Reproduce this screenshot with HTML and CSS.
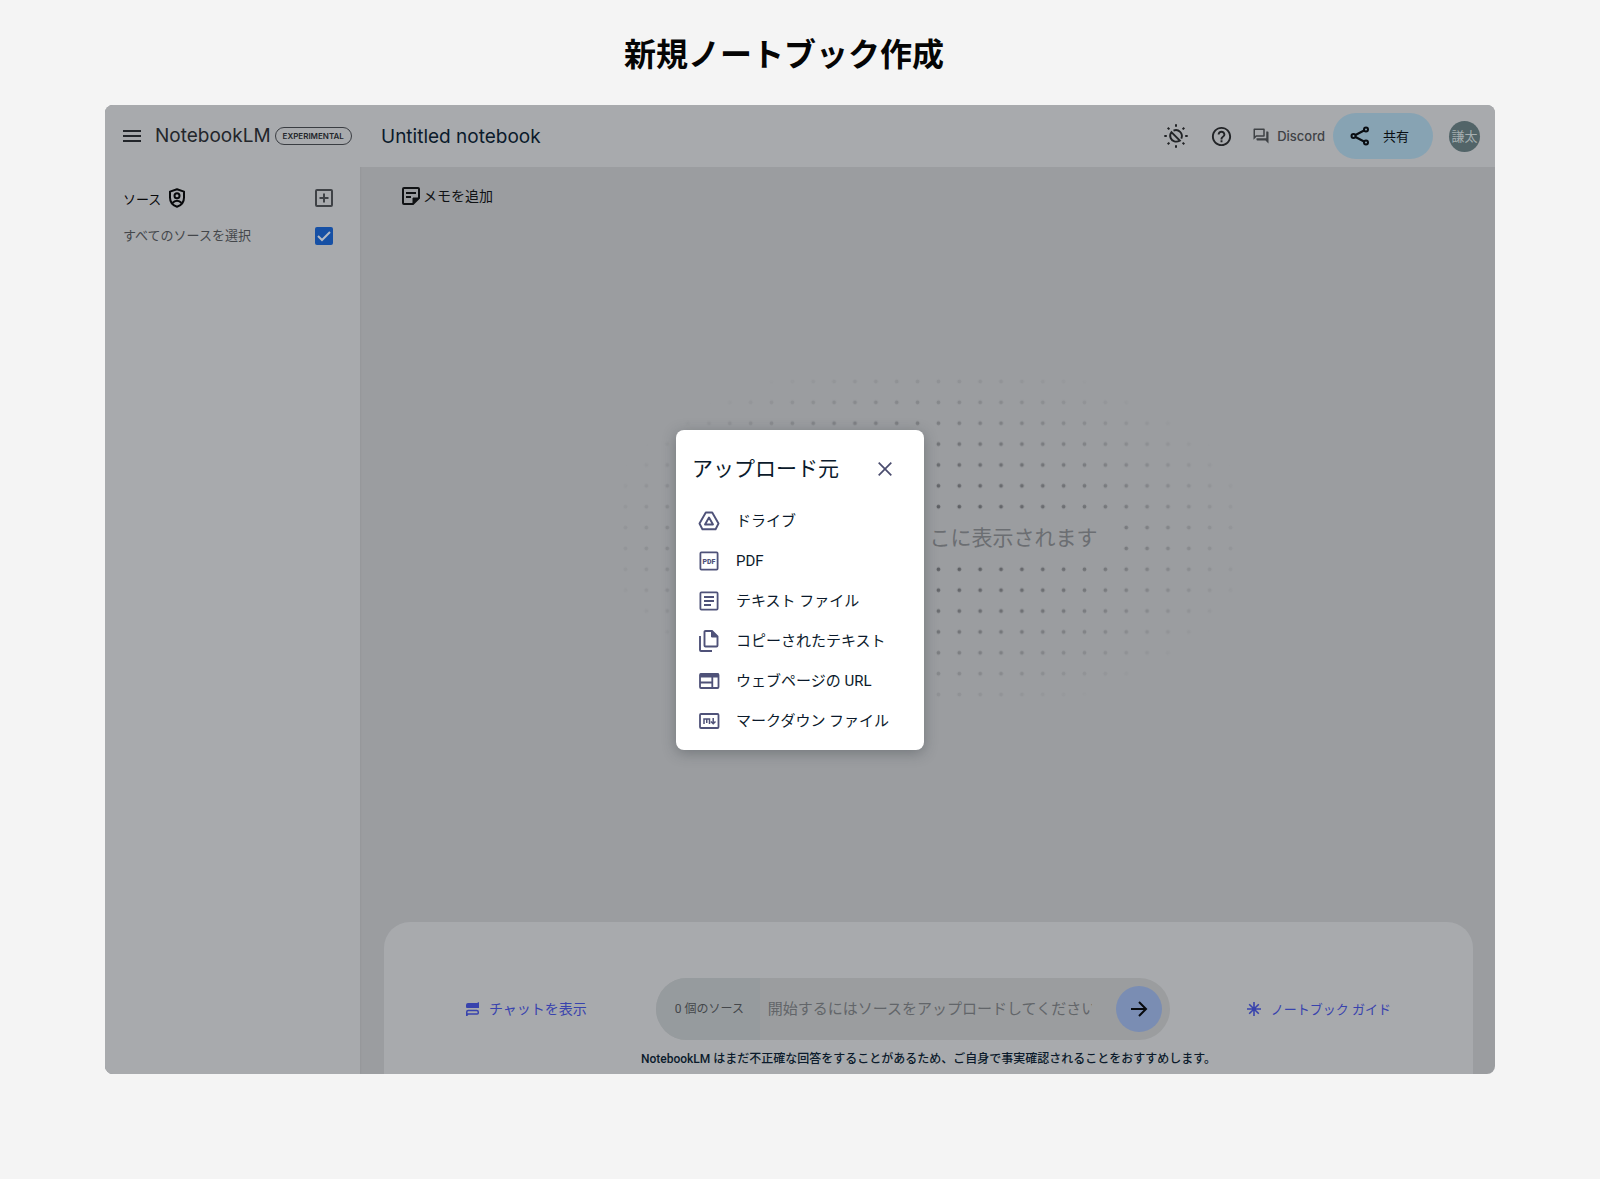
FILE: index.html
```html
<!DOCTYPE html>
<html lang="ja">
<head>
<meta charset="utf-8">
<meta name="viewport" content="width=device-width, initial-scale=1">
<title>新規ノートブック作成</title>
<link rel="stylesheet" href="styles.css">
</head>
<body>
<h1 class="page-title">新規ノートブック作成</h1>
<main class="app">
  <aside class="sidebar">
    <div class="brand">
      <button class="icon-button" type="button" aria-label="メニュー">
        <svg width="18" height="18" viewBox="0 0 18 18" fill="none" stroke="currentColor" stroke-width="2"><path d="M0 4h18M0 9h18M0 14h18"/></svg>
      </button>
      <span class="brand-name">NotebookLM</span>
      <span class="badge">EXPERIMENTAL</span>
    </div>
    <div class="source-list">
      <div class="source-row source-head">
        <h2 class="source-title">ソース
          <svg width="18" height="20" viewBox="0 0 18 20" fill="none" stroke="currentColor" stroke-width="2"><path d="M9 1.2 16 3.6V9.5C16 14 13.2 17.400 9 18.800 4.800 17.400 2 14 2 9.500V3.600Z" stroke-linejoin="round"/><circle cx="9" cy="7.800" r="2.500"/><path d="M4.500 15C6 13.200 7.500 12.800 9 12.800s3 .4 4.500 2.200"/></svg>
        </h2>
        <button class="icon-button add" type="button" aria-label="ソースを追加">
          <svg width="18" height="18" viewBox="0 0 18 18" fill="none" stroke="currentColor" stroke-width="2"><rect x="1" y="1" width="16" height="16" rx="1"/><path d="M9 4.500v9M4.500 9h9"/></svg>
        </button>
      </div>
      <div class="source-row">
        <label class="select-label" for="select-all">すべてのソースを選択</label>
        <span class="check">
          <input id="select-all" class="check-input" type="checkbox" checked>
          <svg class="check-mark" width="18" height="18" viewBox="0 0 18 18" fill="none" stroke="currentColor" stroke-width="2"><path d="m3 9 4 4 8-8"/></svg>
        </span>
      </div>
    </div>
  </aside>
  <section class="workspace">
    <header class="topbar">
      <h2 class="notebook-name">Untitled notebook</h2>
      <div class="actions">
        <button class="icon-button" type="button" aria-label="テーマ">
          <svg width="24" height="24" viewBox="0 0 24 24" fill="none" stroke="currentColor" stroke-width="2"><path d="M12 .3v2.500M12 21.200v2.500M.3 12h2.500M21.200 12h2.500M3.700 3.700l1.700 1.700M18.600 18.600l1.700 1.700M3.700 20.300l1.700-1.700M18.600 5.400l1.700-1.700"/><path d="M9.500 6.600A6 6 0 0 1 17.300 14.600" stroke-width="1.900"/><path d="M7.400 8.200 15.800 16.600C12 18.800 8 17.200 6.600 14 5.800 12 6.200 9.800 7.400 8.200Z" stroke-width="1.900"/></svg>
        </button>
        <button class="icon-button" type="button" aria-label="ヘルプ">
          <svg width="23" height="23" viewBox="0 0 24 24" fill="currentColor"><path d="M11 18h2v-2h-2v2zm1-16C6.480 2 2 6.480 2 12s4.480 10 10 10 10-4.480 10-10S17.520 2 12 2zm0 18c-4.410 0-8-3.590-8-8s3.590-8 8-8 8 3.590 8 8-3.590 8-8 8zm0-14c-2.210 0-4 1.790-4 4h2c0-1.100.9-2 2-2s2 .9 2 2c0 2-3 1.750-3 5h2c0-2.250 3-2.500 3-5 0-2.210-1.790-4-4-4z"/></svg>
        </button>
        <a class="discord" href="#">
          <svg width="18" height="18" viewBox="0 0 24 24" fill="currentColor"><path d="M15 4v7H5.170L4 12.170V4h11m1-2H3c-.55 0-1 .45-1 1v14l4-4h10c.55 0 1-.45 1-1V3c0-.55-.45-1-1-1zm5 4h-2v9H6v2c0 .55.45 1 1 1h11l4 4V7c0-.55-.45-1-1-1z"/></svg>
          Discord
        </a>
        <button class="share" type="button">
          <svg width="20" height="20" viewBox="0 0 20 20" fill="none" stroke="currentColor" stroke-width="2"><circle cx="16" cy="3.500" r="2"/><circle cx="3.500" cy="10" r="2"/><circle cx="16" cy="16.500" r="2"/><path d="m5.500 9 8.500-4.500M5.500 11l8.500 4.500"/></svg>
          <span class="raised">共有</span>
        </button>
        <button class="avatar" type="button"><span class="raised">謙太</span></button>
      </div>
    </header>
    <div class="canvas">
      <button class="add-note" type="button">
        <svg width="18" height="18" viewBox="0 0 18 18" fill="none" stroke="currentColor" stroke-width="2"><path d="M2 1H16Q17 1 17 2V11L11 17H2Q1 17 1 16V2Q1 1 2 1Z"/><path d="M4 6h10M4 10h5"/><path d="M11 17v-6h6z" fill="currentColor" stroke-width="1"/></svg>
        メモを追加
      </button>
      <div class="empty">
        <svg class="dots" width="626" height="334" viewBox="0 0 626 334" aria-hidden="true">
          <defs>
            <pattern id="dot" width="20.867" height="20.875" patternUnits="userSpaceOnUse"><circle cx="10.430" cy="10.430" r="1.900" fill="#54565a"/></pattern>
            <radialGradient id="fade"><stop offset="0" stop-color="#fff"/><stop offset=".5" stop-color="#999"/><stop offset="1" stop-color="#000"/></radialGradient>
            <mask id="oval"><ellipse cx="313" cy="167" rx="330" ry="180" fill="url(#fade)"/></mask>
          </defs>
          <rect width="626" height="334" fill="url(#dot)" mask="url(#oval)"/>
        </svg>
        <p class="empty-text">こに表示されます</p>
      </div>
    </div>
    <footer class="chat-panel">
      <div class="chat-row">
        <button class="text-button" type="button">
          <svg width="13" height="14" viewBox="0 0 13 14"><path d="M2 1H11L13 0V6H1Q0 6 0 5V3Q0 1 2 1Z" fill="currentColor"/><path d="M.75 13.500V10Q.75 8.500 2.200 8.500H10.800Q12.250 8.500 12.250 10V11Q12.250 12 11.200 12H2Z" fill="none" stroke="currentColor" stroke-width="1.500"/></svg>
          <span class="raised">チャットを表示</span>
        </button>
        <form class="prompt">
          <label class="prompt-count" for="prompt">0 個のソース</label>
          <input id="prompt" class="prompt-input" type="text" placeholder="開始するにはソースをアップロードしてください">
          <button class="send" type="button" aria-label="送信">
            <svg width="18" height="18" viewBox="0 0 18 18" fill="none" stroke="currentColor" stroke-width="2"><path d="M1 9h15M9 2l7 7-7 7"/></svg>
          </button>
        </form>
        <button class="text-button guide" type="button">
          <svg width="14" height="14" viewBox="0 0 14 14" fill="none" stroke="currentColor" stroke-width="1.600"><path d="M7 0v14M0 7h14M2.200 2.200l9.600 9.600M11.800 2.200l-9.600 9.600"/></svg>
          <span class="raised">ノートブック ガイド</span>
        </button>
      </div>
      <p class="disclaimer">NotebookLM はまだ不正確な回答をすることがあるため、ご自身で事実確認されることをおすすめします。</p>
    </footer>
  </section>
  <div class="modal-layer">
    <section class="dialog" role="dialog" aria-labelledby="dialog-title">
      <div class="dialog-head">
        <h2 id="dialog-title" class="dialog-title">アップロード元</h2>
        <button class="icon-button close" type="button" aria-label="閉じる">
          <svg width="14" height="14" viewBox="0 0 14 14" fill="none" stroke="currentColor" stroke-width="1.700"><path d="m.7.7 12.600 12.600M13.300.7.7 13.300"/></svg>
        </button>
      </div>
      <button class="upload" type="button">
        <svg width="22" height="22" viewBox="0 0 22 22" fill="none" stroke="currentColor" stroke-width="1.900" stroke-linejoin="round"><path d="M7.800 2.500h6.400L20.500 13.500 17.600 19.200H4.400L1.500 13.500Z"/><path d="M11 7.500 15 14.500H7Z"/></svg>
        ドライブ
      </button>
      <button class="upload" type="button">
        <svg width="22" height="22" viewBox="0 0 22 22" fill="none" stroke="currentColor" stroke-width="1.800"><rect x="2.400" y="2.400" width="17.200" height="17.200" rx="1"/><text class="glyph" x="11" y="13.700" text-anchor="middle">PDF</text></svg>
        PDF
      </button>
      <button class="upload" type="button">
        <svg width="22" height="22" viewBox="0 0 22 22" fill="none" stroke="currentColor" stroke-width="1.800"><rect x="2.400" y="2.400" width="17.200" height="17.200" rx="1"/><path d="M6 7h10M6 11h10M6 15h7"/></svg>
        テキスト ファイル
      </button>
      <button class="upload" type="button">
        <svg width="22" height="22" viewBox="0 0 22 22" fill="none" stroke="currentColor" stroke-width="1.900"><path d="M7.500 1H14L19.500 6.500V15.500Q19.500 16.500 18.500 16.500H7.500Q6.500 16.500 6.500 15.500V2Q6.500 1 7.500 1Z"/><path d="M13.500 1v6h6z" fill="currentColor" stroke-width="1"/><path d="M2 6V20Q2 21 3 21H14"/></svg>
        コピーされたテキスト
      </button>
      <button class="upload" type="button">
        <svg width="22" height="22" viewBox="0 0 22 22" fill="none" stroke="currentColor" stroke-width="1.800"><rect x="2" y="4" width="18.500" height="14" rx="1"/><path d="M2 5.500h18.500" stroke-width="4"/><path d="M2 12.500h12M14.300 7v11"/></svg>
        ウェブページの URL
      </button>
      <button class="upload" type="button">
        <svg width="22" height="22" viewBox="0 0 22 22" fill="none" stroke="currentColor" stroke-width="1.800"><rect x="2" y="4" width="18.500" height="14" rx="1"/><path d="M6 14V9h5.500v5M8.750 9v4M15.200 8v5.500M12.900 11.500l2.300 2.300 2.300-2.300" stroke-width="1.500"/></svg>
        マークダウン ファイル
      </button>
    </section>
  </div>
</main>
</body>
</html>
```
FILE: styles.css
```css
* {
  box-sizing: border-box;
}

body {
  margin: 0;
  background: #f4f4f4;
  color: #0b1a2b;
  font-family: Roboto, "Noto Sans CJK JP", sans-serif;
  font-size: 13px;
}

h1, h2, p {
  margin: 0;
  font-weight: 400;
}

button {
  display: flex;
  align-items: center;
  padding: 0;
  border: 0;
  background: none;
  color: inherit;
  font: inherit;
  cursor: pointer;
}

svg {
  display: block;
  flex: none;
}

/* Japanese glyphs sit low in their line box; this centres them on icons */
.raised {
  padding-bottom: 2px;
}

.page-title {
  padding: 28px 32px 29px 0;
  color: #050505;
  font-family: "Noto Sans CJK JP", sans-serif;
  font-size: 32px;
  font-weight: 700;
  line-height: 48px;
  text-align: center;
}

.app {
  position: relative;
  display: flex;
  min-height: calc(100vh - 210px);
  margin: 0 105px 105px;
  overflow: hidden;
  border-radius: 8px;
  background: #9b9da0;
}

/* Sidebar */

.sidebar {
  flex: 0 0 255px;
  background: #a8aaad;
  box-shadow: 0 0 2px #8d9093;
}

.brand {
  display: flex;
  align-items: center;
  height: 62px;
  padding-left: 18px;
  color: #23262b;
}

.brand-name {
  margin-left: 14px;
  font-family: Inter, sans-serif;
  font-size: 19px;
  line-height: 24px;
}

.badge {
  margin-left: 4px;
  padding: 0 7px;
  border: 1px solid #3a3d42;
  border-radius: 9px;
  font-family: Inter, sans-serif;
  font-size: 8px;
  font-weight: 600;
  line-height: 16px;
}

.source-list {
  padding: 12px 27px 0 18px;
}

.source-row {
  display: flex;
  align-items: center;
  justify-content: space-between;
  height: 38px;
}

.source-title {
  display: flex;
  align-items: center;
  gap: 7px;
  color: #08090b;
  font-size: 13px;
}

.add {
  color: #3f4246;
}

.select-label {
  padding-bottom: 3px;
  color: #44474b;
}

.check {
  position: relative;
  width: 18px;
  height: 18px;
}

.check-input {
  width: 18px;
  height: 18px;
  margin: 0;
  border-radius: 2px;
  appearance: none;
}

.check-input:checked {
  background: #1650a5;
}

.check-mark {
  position: absolute;
  inset: 0;
  color: #b4bac4;
  pointer-events: none;
}

/* Workspace */

.workspace {
  display: flex;
  flex: 1;
  flex-direction: column;
  min-width: 0;
}

.topbar {
  display: flex;
  align-items: center;
  justify-content: space-between;
  height: 62px;
  padding: 0 15px 0 21px;
  background: #a8aaad;
}

.notebook-name {
  padding-top: 2px;
  font-family: Inter, sans-serif;
  font-size: 19px;
  line-height: 24px;
}

.actions {
  display: flex;
  align-items: center;
  gap: 22px;
  color: #222427;
}

.discord {
  display: flex;
  align-items: center;
  gap: 7px;
  margin-right: -14px;
  margin-left: -3px;
  color: #3f4246;
  font-family: Inter, sans-serif;
  font-size: 13px;
  font-weight: 500;
  text-decoration: none;
}

.share {
  gap: 13px;
  height: 46px;
  margin-right: -6px;
  padding: 0 24px 0 17px;
  border-radius: 23px;
  background: #87a3b3;
  color: #090d12;
}

.avatar {
  justify-content: center;
  width: 31px;
  height: 31px;
  border-radius: 50%;
  background: #526468;
  color: #a6afb1;
  white-space: nowrap;
}

.canvas {
  display: flex;
  flex: 1;
  flex-direction: column;
}

.add-note {
  align-self: flex-start;
  gap: 3px;
  margin: 19px 0 0 42px;
  color: #101214;
  font-size: 14px;
  line-height: 20px;
}

.empty {
  display: grid;
  flex: 1;
  place-items: center;
  padding-bottom: 52px;
}

.dots,
.empty-text {
  grid-area: 1 / 1;
}

.empty-text {
  padding: 0 22px 0 194px;
  background: #9b9da0;
  color: #6b6e72;
  font-size: 21px;
  line-height: 40px;
}

/* Chat panel */

.chat-panel {
  margin: 0 22px 0 24px;
  padding: 56px 0 6px;
  border-radius: 26px 26px 0 0;
  background: #a8aaad;
}

.chat-row {
  display: flex;
  align-items: center;
  justify-content: space-between;
  padding: 0 82px;
}

.text-button {
  gap: 10px;
  color: #3843ad;
  font-size: 14px;
}

.guide {
  font-size: 13px;
}

.prompt {
  display: flex;
  flex: 0 1 514px;
  align-items: center;
  height: 62px;
  margin-right: 8px;
  padding-right: 8px;
  overflow: hidden;
  border-radius: 31px;
  background: #9b9d9f;
}

.prompt-count {
  flex: 0 0 104px;
  padding-left: 19px;
  background: #969b9e;
  color: #44474b;
  font-size: 12px;
  line-height: 62px;
}

.prompt-input {
  flex: 1;
  min-width: 0;
  margin-right: 24px;
  padding: 0 0 0 8px;
  border: 0;
  background: none;
  font: inherit;
  font-size: 15px;
  line-height: 24px;
}

.prompt-input::placeholder {
  color: #626569;
}

.send {
  flex: none;
  justify-content: center;
  width: 46px;
  height: 46px;
  border-radius: 50%;
  background: #7a8db3;
  color: #080a0e;
}

.disclaimer {
  margin-top: 10px;
  font-size: 12px;
  font-weight: 500;
  line-height: 18px;
  text-align: center;
}

/* Upload dialog */

.modal-layer {
  position: absolute;
  inset: 0;
  display: grid;
  place-items: center;
}

.dialog {
  width: 248px;
  padding-bottom: 8px;
  border-radius: 8px;
  background: #fff;
  box-shadow: 0 3px 14px rgb(40 50 55 / 35%);
}

.dialog-head {
  display: flex;
  align-items: center;
  justify-content: space-between;
  height: 72px;
  padding: 6px 32px 0 16px;
}

.dialog-title {
  font-size: 21px;
  line-height: 32px;
}

.close {
  color: #4a4c6e;
}

.upload {
  gap: 16px;
  width: 100%;
  height: 40px;
  padding: 0 0 2px 22px;
  font-size: 15px;
  line-height: 20px;
}

.upload svg {
  color: #4f5279;
}

.glyph {
  fill: currentColor;
  stroke: none;
  font-family: Roboto, sans-serif;
  font-size: 7px;
  font-weight: 900;
}
```
